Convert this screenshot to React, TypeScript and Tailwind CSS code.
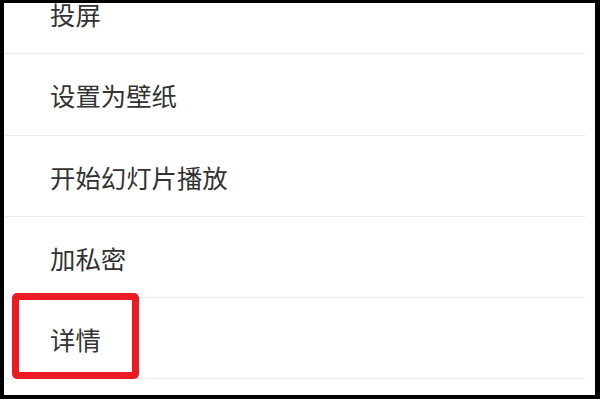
const items = ["投屏", "设置为壁纸", "开始幻灯片播放", "加私密", "详情"];

export default function App() {
  return (
    <div
      className="relative h-[399px] w-[600px] overflow-hidden border-t-[3px] border-r-[5px] border-b-4 border-l-4 border-black bg-white"
      style={{ fontFamily: '"Noto Sans CJK SC", "Noto Sans", sans-serif' }}
    >
      <ul className="-mt-[30px] mr-[10px]">
        {items.map((label) => (
          <li
            key={label}
            className="flex h-[81.3px] items-center border-b border-[#ececec] pt-[3px] pl-[46px] text-[25.4px] leading-none text-[#333333]"
          >
            {label}
          </li>
        ))}
      </ul>
      <div className="absolute top-[290px] left-[8px] h-[86px] w-[127px] rounded-[5px] border-[7px] border-[#ea1b25]" />
    </div>
  );
}
